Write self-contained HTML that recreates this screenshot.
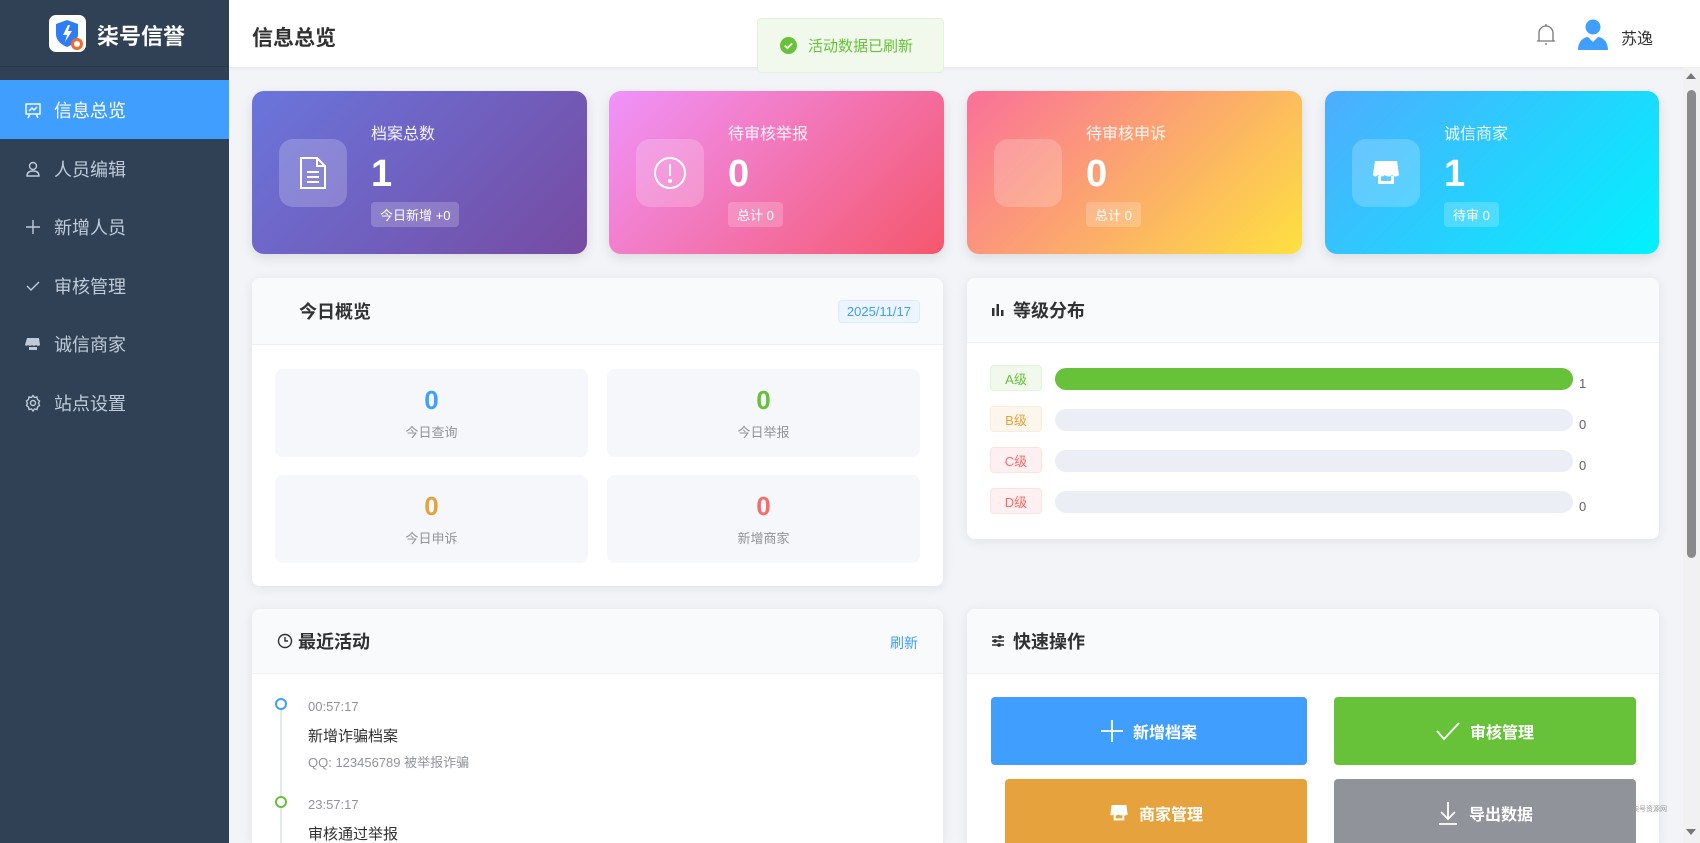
<!DOCTYPE html>
<html style="height:843px;overflow:hidden"><head><meta charset="utf-8">
<style>
*{box-sizing:border-box;margin:0;padding:0}
body{width:1700px;height:843px;overflow:hidden;background:#f3f4f8;font-family:"Liberation Sans","Noto Sans CJK SC",sans-serif;position:relative}
.abs{position:absolute}
.side{left:0;top:0;width:229px;height:843px;background:#304156}
.brand{left:0;top:0;width:229px;height:67px;border-bottom:1px solid #283545}
.menu{left:0;width:229px;height:59px;color:#bfcbd9;font-size:18px;display:flex;align-items:center;padding-left:24px}
.menu svg{margin-right:12px}
.menu.on{background:#409eff;color:#fff}
.hdr{left:229px;top:0;width:1471px;height:67px;background:#fff;box-shadow:0 1px 4px rgba(0,21,41,.08)}
.card{border-radius:12px;box-shadow:0 4px 12px rgba(0,0,0,.1);color:#fff}
.card .ib{position:absolute;left:27px;top:48px;width:68px;height:68px;border-radius:14px;background:rgba(255,255,255,.2);display:flex;align-items:center;justify-content:center}
.card .t{position:absolute;left:119px;top:29px;font-size:16px;opacity:.92}
.card .n{position:absolute;left:119px;top:62px;font-size:38px;font-weight:bold}
.card .b{position:absolute;left:119px;top:111px;font-size:13px;padding:3px 9px;border-radius:4px;background:rgba(255,255,255,.2)}
.panel{background:#fff;border-radius:8px;box-shadow:0 2px 12px rgba(0,0,0,.08);overflow:hidden}
.ph{position:absolute;left:0;top:0;right:0;height:67px;background:#f9fafb;border-bottom:1px solid #eef0f3;font-size:18px;font-weight:bold;color:#303133;display:flex;align-items:center}
.box{background:#f5f7fa;border-radius:8px;text-align:center}
.box .v{font-size:26px;font-weight:bold;margin-top:16px}
.box .l{font-size:13px;color:#909399;margin-top:6px}
.tag{width:52px;height:26px;border-radius:4px;font-size:13px;display:flex;align-items:center;justify-content:center;border:1px solid}
.bar{height:22px;border-radius:11px;background:#ebeef5}
.gv{font-size:13px;color:#606266}
.btn{border-radius:4px;color:#fff;font-size:16px;font-weight:bold;display:flex;align-items:center;justify-content:center;gap:10px}
</style></head><body>
<div class="abs side"></div>
<div class="abs brand">
  <div class="abs" style="left:49px;top:15px;width:37px;height:37px;background:#fff;border-radius:7px">
    <svg width="37" height="37" viewBox="0 0 37 37"><path d="M18 5 L29 9 V19 C29 26 23 30 18 32 C13 30 7 26 7 19 V9Z" fill="#2f7df6"/><path d="M19 10 L14 20 H18 L16 27 L23 16 H19 L21 10Z" fill="#fff"/><circle cx="28" cy="29" r="6" fill="#f06b2c"/><circle cx="28" cy="29" r="3" fill="#fff"/></svg>
  </div>
  <div class="abs" style="left:97px;top:19px;font-size:22px;font-weight:bold;color:#fff">柒号信誉</div>
</div>
<div class="abs menu on" style="top:80px"><svg width="18" height="18" viewBox="0 0 18 18" fill="none" stroke="#fff" stroke-width="1.4"><rect x="2" y="3" width="14" height="10"/><path d="M5 10l3-3 2 2 3-3M6 13l-2 4M12 13l2 4"/></svg>信息总览</div>
<div class="abs menu" style="top:139px"><svg width="18" height="18" viewBox="0 0 18 18" fill="none" stroke="#bfcbd9" stroke-width="1.4"><circle cx="9" cy="6" r="3.5"/><path d="M3 16c0-4 3-5 6-5s6 1 6 5z"/></svg>人员编辑</div>
<div class="abs menu" style="top:197px"><svg width="18" height="18" viewBox="0 0 18 18" stroke="#bfcbd9" stroke-width="1.4"><path d="M9 2v14M2 9h14"/></svg>新增人员</div>
<div class="abs menu" style="top:256px"><svg width="18" height="18" viewBox="0 0 18 18" fill="none" stroke="#bfcbd9" stroke-width="1.4"><path d="M3 9l4 4 8-8"/></svg>审核管理</div>
<div class="abs menu" style="top:314px"><svg width="18" height="18" viewBox="0 0 18 18" fill="#bfcbd9"><path d="M3 3h12l1 7c-1 1-3 1-4 0-1 1-3 1-4 0-1 1-3 1-4 0-1 1-2 1-3 0z"/><rect x="5" y="12" width="8" height="3"/></svg>诚信商家</div>
<div class="abs menu" style="top:373px"><svg width="18" height="18" viewBox="0 0 18 18" fill="none" stroke="#bfcbd9" stroke-width="1.4"><circle cx="9" cy="9" r="2.5"/><path d="M9 1.5l1.5 2 2.5-.5.5 2.5 2 1.5-1 2.2 1 2.3-2 1.5-.5 2.5-2.5-.5-1.5 2-1.5-2-2.5.5-.5-2.5-2-1.5 1-2.3-1-2.2 2-1.5.5-2.5 2.5.5z"/></svg>站点设置</div>

<div class="abs hdr"></div>
<div class="abs" style="left:252px;top:22px;font-size:21px;font-weight:bold;color:#303133">信息总览</div>
<div class="abs" style="left:757px;top:18px;width:187px;height:55px;background:#f0f9eb;border:1px solid #e1f3d8;border-radius:4px;display:flex;align-items:center;padding-left:22px;color:#67c23a;font-size:15px">
  <svg width="17" height="17" viewBox="0 0 16 16" style="margin-right:11px"><circle cx="8" cy="8" r="8" fill="#67c23a"/><path d="M4.5 8l2.5 2.5 4.5-4.5" stroke="#fff" stroke-width="1.6" fill="none"/></svg>活动数据已刷新</div>
<svg class="abs" style="left:1535px;top:23px" width="22" height="24" viewBox="0 0 22 24" fill="none" stroke="#777" stroke-width="1.3"><path d="M4 18V10a7 7 0 0 1 14 0v8M2 18h18M11 1v2M10 21h2"/></svg>
<svg class="abs" style="left:1577px;top:18px" width="32" height="32" viewBox="0 0 32 32" fill="#409eff"><circle cx="16" cy="9" r="7.5"/><path d="M1 32c0-9 6-13 10-13l5 5 5-5c4 0 10 4 10 13z"/></svg>
<div class="abs" style="left:1621px;top:25px;font-size:16px;color:#303133">苏逸</div>

<div class="abs" style="left:1683px;top:67px;width:17px;height:776px;background:#f1f1f1"></div>
<div class="abs" style="left:1687px;top:90px;width:9px;height:468px;background:#8a8a8a;border-radius:5px"></div>
<div class="abs" style="left:1686px;top:73px;width:0;height:0;border-left:5px solid transparent;border-right:5px solid transparent;border-bottom:6px solid #777"></div>
<div class="abs" style="left:1686px;top:829px;width:0;height:0;border-left:5px solid transparent;border-right:5px solid transparent;border-top:6px solid #777"></div>

<div class="abs card" style="left:252px;top:91px;width:335px;height:163px;background:linear-gradient(135deg,#6a75dc,#764ba2)">
  <div class="ib"><svg width="30" height="34" viewBox="0 0 30 34" fill="none" stroke="#fff" stroke-width="2"><path d="M3 2h16l8 8v22H3z M19 2v8h8 M9 16h12M9 21h12M9 26h12"/></svg></div>
  <div class="t">档案总数</div><div class="n">1</div><div class="b">今日新增 +0</div></div>
<div class="abs card" style="left:609px;top:91px;width:335px;height:163px;background:linear-gradient(135deg,#f093fb,#f5576c)">
  <div class="ib"><svg width="34" height="34" viewBox="0 0 34 34" fill="none" stroke="#fff" stroke-width="2"><circle cx="17" cy="17" r="15"/><path d="M17 8v12"/><circle cx="17" cy="25" r="1" fill="#fff"/></svg></div>
  <div class="t">待审核举报</div><div class="n">0</div><div class="b">总计 0</div></div>
<div class="abs card" style="left:967px;top:91px;width:335px;height:163px;background:linear-gradient(135deg,#fa709a,#fee140)">
  <div class="ib"></div>
  <div class="t">待审核申诉</div><div class="n">0</div><div class="b">总计 0</div></div>
<div class="abs card" style="left:1325px;top:91px;width:334px;height:163px;background:linear-gradient(135deg,#4facfe,#00f2fe)">
  <div class="ib"><svg width="30" height="30" viewBox="0 0 30 30" fill="#fff"><path d="M4 3h22l2 14c-2 2-5 2-7 0-2 2-5 2-7 0-2 2-5 2-7 0-2 2-4 2-5 0z"/><path d="M7 18v8h16v-8h-3v5h-10v-5z"/></svg></div>
  <div class="t">诚信商家</div><div class="n">1</div><div class="b">待审 0</div></div>

<div class="abs panel" style="left:252px;top:278px;width:691px;height:308px">
  <div class="ph" style="padding-left:47px">今日概览</div>
  <div class="abs" style="right:23px;top:22px;padding:3px 8px;background:#ecf5ff;border:1px solid #d9ecff;border-radius:4px;color:#409eff;font-size:13px">2025/11/17</div>
  <div class="abs box" style="left:23px;top:91px;width:313px;height:88px"><div class="v" style="color:#409eff">0</div><div class="l">今日查询</div></div>
  <div class="abs box" style="left:355px;top:91px;width:313px;height:88px"><div class="v" style="color:#67c23a">0</div><div class="l">今日举报</div></div>
  <div class="abs box" style="left:23px;top:197px;width:313px;height:88px"><div class="v" style="color:#e6a23c">0</div><div class="l">今日申诉</div></div>
  <div class="abs box" style="left:355px;top:197px;width:313px;height:88px"><div class="v" style="color:#f56c6c">0</div><div class="l">新增商家</div></div>
</div>

<div class="abs panel" style="left:967px;top:278px;width:692px;height:261px">
  <div class="ph" style="padding-left:24px;height:65px"><svg width="14" height="14" viewBox="0 0 14 14" fill="#303133" style="margin-right:8px"><rect x="1" y="5" width="2.5" height="8"/><rect x="5.5" y="1" width="2.5" height="12"/><rect x="10" y="7" width="2.5" height="6"/></svg>等级分布</div>
  <div class="abs tag" style="left:23px;top:87px;background:#f0f9eb;border-color:#e1f3d8;color:#67c23a">A级</div>
  <div class="abs bar" style="left:88px;top:90px;width:518px;background:#67c23a"></div><div class="abs gv" style="left:612px;top:98px">1</div>
  <div class="abs tag" style="left:23px;top:128px;background:#fdf6ec;border-color:#faecd8;color:#e6a23c">B级</div>
  <div class="abs bar" style="left:88px;top:131px;width:518px"></div><div class="abs gv" style="left:612px;top:139px">0</div>
  <div class="abs tag" style="left:23px;top:169px;background:#fef0f0;border-color:#fde2e2;color:#f56c6c">C级</div>
  <div class="abs bar" style="left:88px;top:172px;width:518px"></div><div class="abs gv" style="left:612px;top:180px">0</div>
  <div class="abs tag" style="left:23px;top:210px;background:#fef0f0;border-color:#fde2e2;color:#f56c6c">D级</div>
  <div class="abs bar" style="left:88px;top:213px;width:518px"></div><div class="abs gv" style="left:612px;top:221px">0</div>
</div>

<div class="abs panel" style="left:252px;top:609px;width:691px;height:234px;border-radius:8px 8px 0 0">
  <div class="ph" style="padding-left:25px;height:65px"><svg width="16" height="16" viewBox="0 0 16 16" fill="none" stroke="#303133" stroke-width="1.4" style="margin-right:5px"><circle cx="8" cy="8" r="6.5"/><path d="M8 4v4h3"/></svg>最近活动</div>
  <div class="abs" style="right:25px;top:24px;font-size:14px;color:#409eff">刷新</div>
  <div class="abs" style="left:28px;top:101px;width:2px;height:160px;background:#e4e7ed"></div>
  <div class="abs" style="left:23px;top:89px;width:12px;height:12px;border-radius:50%;border:2px solid #409eff;background:#fff"></div>
  <div class="abs" style="left:56px;top:90px;font-size:13px;color:#909399">00:57:17</div>
  <div class="abs" style="left:56px;top:116px;font-size:15px;color:#303133">新增诈骗档案</div>
  <div class="abs" style="left:56px;top:143px;font-size:13px;color:#909399">QQ: 123456789 被举报诈骗</div>
  <div class="abs" style="left:23px;top:187px;width:12px;height:12px;border-radius:50%;border:2px solid #67c23a;background:#fff"></div>
  <div class="abs" style="left:56px;top:188px;font-size:13px;color:#909399">23:57:17</div>
  <div class="abs" style="left:56px;top:214px;font-size:15px;color:#303133">审核通过举报</div>
</div>

<div class="abs panel" style="left:967px;top:609px;width:692px;height:234px;border-radius:8px 8px 0 0">
  <div class="ph" style="padding-left:24px;height:65px"><svg width="14" height="14" viewBox="0 0 14 14" fill="none" stroke="#303133" stroke-width="1.4" style="margin-right:8px"><path d="M1 3h12M1 7h12M1 11h12"/><circle cx="9" cy="3" r="1.2" fill="#303133"/><circle cx="4" cy="7" r="1.2" fill="#303133"/><circle cx="8" cy="11" r="1.2" fill="#303133"/></svg>快速操作</div>
  <div class="abs btn" style="left:24px;top:88px;width:316px;height:68px;background:#409eff"><svg width="22" height="22" viewBox="0 0 22 22" stroke="#fff" stroke-width="1.8"><path d="M11 0v22M0 11h22"/></svg>新增档案</div>
  <div class="abs btn" style="left:367px;top:88px;width:302px;height:68px;background:#67c23a"><svg width="24" height="20" viewBox="0 0 24 20" fill="none" stroke="#fff" stroke-width="1.8"><path d="M1 10l7 8L23 2"/></svg>审核管理</div>
  <div class="abs btn" style="left:38px;top:170px;width:302px;height:68px;background:#e6a23c;border-radius:4px 4px 0 0"><svg width="20" height="22" viewBox="0 0 30 30" fill="#fff"><path d="M4 3h22l2 14c-2 2-5 2-7 0-2 2-5 2-7 0-2 2-5 2-7 0-2 2-4 2-5 0z"/><path d="M7 18v8h16v-8h-3v5h-10v-5z"/></svg>商家管理</div>
  <div class="abs btn" style="left:367px;top:170px;width:302px;height:68px;background:#909399;border-radius:4px 4px 0 0"><svg width="22" height="24" viewBox="0 0 22 24" fill="none" stroke="#fff" stroke-width="1.8"><path d="M11 1v16M4 11l7 7 7-7M2 23h18"/></svg>导出数据</div>
</div>
<div class="abs" style="left:1632px;top:804px;font-size:7px;color:#999">柒号资源网</div>
</body></html>
